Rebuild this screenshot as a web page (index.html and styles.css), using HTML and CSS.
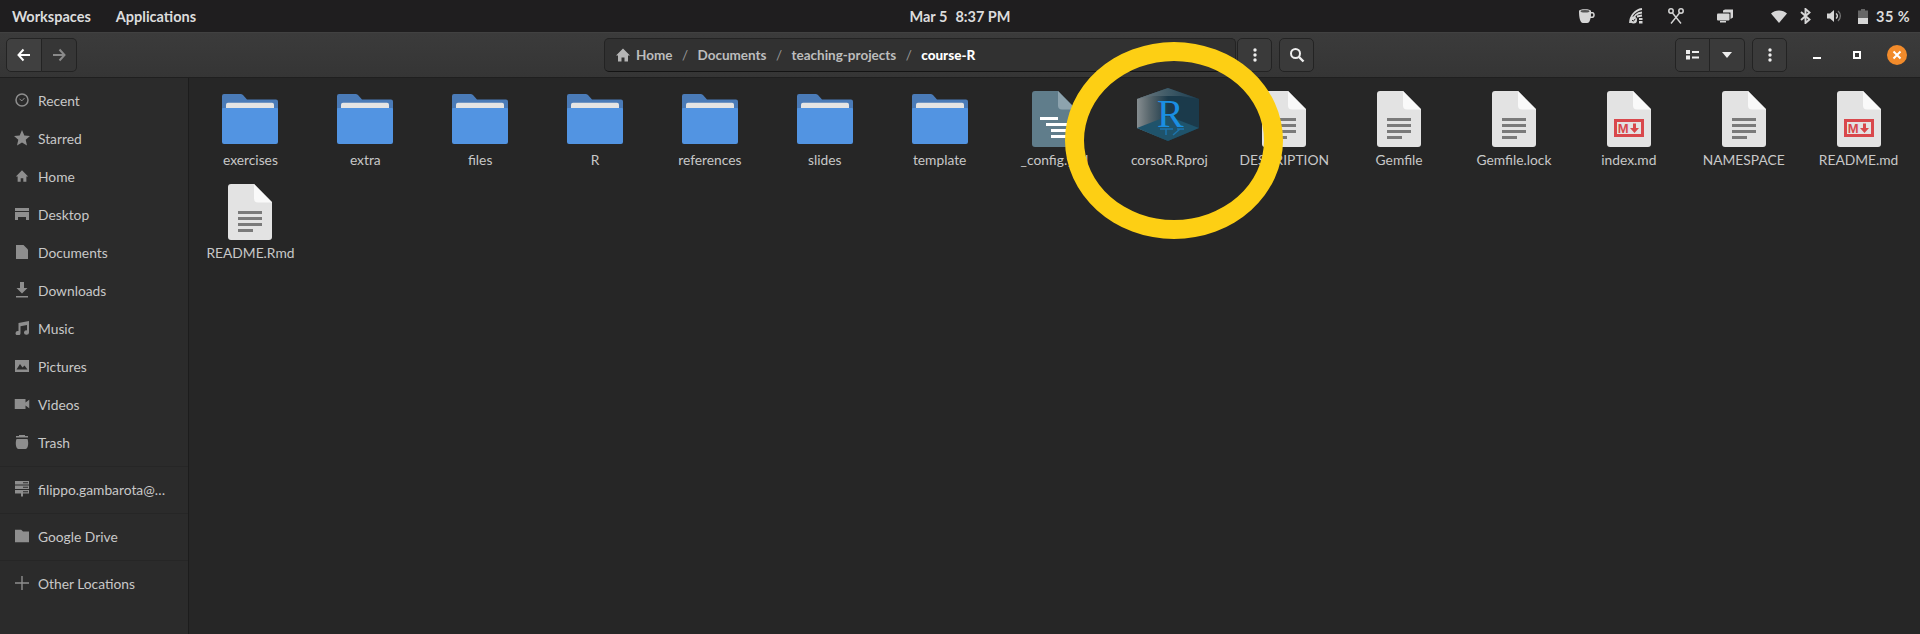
FILE: index.html
```html
<!DOCTYPE html>
<html lang="en">
<head>
  <meta charset="UTF-8">
  <title>course-R - Files</title>
  <link rel="stylesheet" href="styles.css">
</head>
<body>
  <svg class="defs" width="0" height="0">
    <symbol id="folder" viewBox="0 0 56 50">
      <path d="M2 0H18.500Q20 0 21 1L25 5.500H54Q56 5.500 56 7.500V20H0V2Q0 0 2 0Z" fill="#4a7bb8"/>
      <path d="M6 8.800H50Q52 8.800 52 10.800V20H4V10.800Q4 8.800 6 8.800Z" fill="#e4e4e4"/>
      <path d="M0 15Q0 14 1 14H55Q56 14 56 15V48Q56 50 54 50H2Q0 50 0 48Z" fill="#5294e2"/>
    </symbol>
    <symbol id="doc" viewBox="0 0 44 56">
      <path d="M3 0H26L44 18V53Q44 56 41 56H3Q0 56 0 53V3Q0 0 3 0Z" fill="#e3e3e3"/>
      <path d="M26 0L44 18.500H30Q26 18.500 26 14.500Z" fill="#f9f9f9"/>
    </symbol>
    <symbol id="lines" viewBox="0 0 44 56">
      <path d="M10 27H34V30H10ZM10 33H34V36H10ZM10 39H34V42H10ZM10 45H25V48H10Z" fill="#7a7a7a"/>
    </symbol>
    <symbol id="arrow-left" viewBox="0 0 16 16">
      <path d="M7.500 2.500L2.500 8L7.500 13.500M3 8H14" fill="none" stroke="currentColor" stroke-width="2"/>
    </symbol>
    <symbol id="arrow-right" viewBox="0 0 16 16">
      <path d="M8.500 2.500L13.500 8L8.500 13.500M13 8H2" fill="none" stroke="currentColor" stroke-width="2"/>
    </symbol>
    <symbol id="home" viewBox="0 0 16 16">
      <path d="M8 1.500L15 8.500H13V14.500H9.500V10.500H6.500V14.500H3V8.500H1Z" fill="currentColor"/>
    </symbol>
    <symbol id="dots" viewBox="0 0 16 16">
      <circle cx="8" cy="3" r="1.700" fill="currentColor"/><circle cx="8" cy="8" r="1.700" fill="currentColor"/><circle cx="8" cy="13" r="1.700" fill="currentColor"/>
    </symbol>
  </svg>

  <div class="topbar">
    <div class="topbar-left"><span>Workspaces</span><span>Applications</span></div>
    <div class="clock"><span>Mar 5</span><span>8:37 PM</span></div>
    <div class="tray">
      <svg class="tray-coffee" width="18" height="16" viewBox="0 0 18 16"><path d="M1 3C1 .500 13 .500 13 3V4H14.500C17.500 4 17.500 10 14.500 10H12.600C12 13 11 15 9 15H5C2 15 1 9 1 3Z" fill="#d6d6d6"/><ellipse cx="7" cy="3.200" rx="4.500" ry="1.300" fill="#555"/><path d="M13 5.600H14.300C15.600 5.600 15.600 8.400 14.300 8.400H12.900Z" fill="#1f1e1f"/></svg>
      <svg class="tray-net" width="14" height="16" viewBox="0 0 14 16"><path d="M1 15C1 8 6 2 13 1M4.500 12C4.500 8 8 5 13 4.500M8 8.500L13 7.500" fill="none" stroke="#d6d6d6" stroke-width="1.800"/><circle cx="4.500" cy="12" r="3.500" fill="#d6d6d6"/><path d="M3 12L4.300 13.300L6.300 10.800" fill="none" stroke="#1f1e1f" stroke-width="1"/><path d="M10 10H13.500V12H10ZM10 13H13.500V15.500H10Z" fill="#d6d6d6"/></svg>
      <svg class="tray-cut" width="16" height="16" viewBox="0 0 16 16"><circle cx="3" cy="3" r="2.200" fill="none" stroke="#d6d6d6" stroke-width="1.500"/><circle cx="13" cy="3" r="2.200" fill="none" stroke="#d6d6d6" stroke-width="1.500"/><path d="M4.500 5L13 15.500M11.500 5L3 15.500" stroke="#d6d6d6" stroke-width="1.400"/></svg>
      <svg class="tray-screens" width="16" height="14" viewBox="0 0 16 14"><path d="M6 1.500L8 .500H16V8.500L13.500 10V3.500H6Z" fill="#d6d6d6"/><rect x="0" y="4.500" width="12.500" height="7" rx="1" fill="#d6d6d6"/><rect x="3" y="12" width="6" height="1.500" fill="#d6d6d6"/></svg>
      <svg class="tray-wifi" width="16" height="14" viewBox="0 0 16 14"><path d="M0 4.500C4 .500 12 .500 16 4.500L8 14Z" fill="#d6d6d6"/></svg>
      <svg class="tray-bt" width="11" height="16" viewBox="0 0 11 16"><path d="M1 4L9.500 11.500L5.500 15V1L9.500 4.500L1 12" fill="none" stroke="#d6d6d6" stroke-width="1.900"/></svg>
      <svg class="tray-vol" width="15" height="14" viewBox="0 0 15 14"><path d="M0 4.500H3L7 1V13L3 9.500H0Z" fill="#d6d6d6"/><path d="M9 4.500A3 3 0 0 1 9 9.500" fill="none" stroke="#d6d6d6" stroke-width="1.400"/><path d="M11 2A6.500 6.500 0 0 1 11 12" fill="none" stroke="#777" stroke-width="1.300"/></svg>
      <svg class="tray-bat" width="10" height="15" viewBox="0 0 10 15"><path d="M3 0H7V1.500H10V15H0V1.500H3Z" fill="#666"/><rect y="9" width="10" height="6" fill="#d6d6d6"/></svg>
      <span class="battery-text">35 %</span>
    </div>
  </div>

  <header class="headerbar">
    <div class="btn-group nav-group">
      <button class="btn nav-back"><svg width="16" height="16"><use href="#arrow-left"/></svg></button>
      <button class="btn nav-forward"><svg width="16" height="16"><use href="#arrow-right"/></svg></button>
    </div>
    <div class="pathbar">
      <svg class="path-home" width="16" height="16"><use href="#home"/></svg>
      <span>Home</span><i>/</i><span>Documents</span><i>/</i><span>teaching-projects</span><i>/</i><b>course-R</b>
    </div>
    <button class="btn btn-solo path-menu"><svg width="16" height="16"><use href="#dots"/></svg></button>
    <button class="btn btn-solo search-btn">
      <svg width="16" height="16" viewBox="0 0 16 16"><circle cx="6.500" cy="6.500" r="4.500" fill="none" stroke="currentColor" stroke-width="2"/><path d="M10 10L14.500 14.500" stroke="currentColor" stroke-width="2.400"/></svg>
    </button>
    <div class="btn-group view-group">
      <button class="btn view-list"><svg width="14" height="10" viewBox="0 0 14 10"><path d="M0 0H4V4H0ZM0 5.500H4V9.500H0ZM6 1H13V3H6ZM6 6.500H13V8.500H6Z" fill="currentColor"/></svg></button>
      <button class="btn view-drop"><svg width="10" height="6" viewBox="0 0 10 6"><path d="M0 0H10L5 6Z" fill="currentColor"/></svg></button>
    </div>
    <button class="btn btn-solo main-menu"><svg width="16" height="16"><use href="#dots"/></svg></button>
    <div class="wm">
      <span class="wm-min"></span>
      <span class="wm-max"></span>
      <span class="wm-close"><svg width="10" height="10" viewBox="0 0 10 10"><path d="M1.500 1.500L8.500 8.500M8.500 1.500L1.500 8.500" stroke="#fff" stroke-width="2"/></svg></span>
    </div>
  </header>

  <div class="content">
    <nav class="sidebar">
      <div class="section">
        <a class="row"><svg width="14" height="14" viewBox="0 0 14 14"><circle cx="7" cy="7" r="6" fill="none" stroke="currentColor" stroke-width="1.500"/><path d="M4.500 6L7 7.800L9.500 5" fill="none" stroke="currentColor"/></svg>Recent</a>
        <a class="row"><svg width="16" height="16" viewBox="0 0 16 16"><path d="M8 0L10.300 5.400L16 5.900L11.700 9.700L13 15.500L8 12.400L3 15.500L4.300 9.700L0 5.900L5.700 5.400Z" fill="currentColor"/></svg>Starred</a>
        <a class="row"><svg width="14" height="14"><use href="#home"/></svg>Home</a>
        <a class="row"><svg width="14" height="14" viewBox="0 0 14 14"><path d="M0 1H14V4H0ZM0 5H14V13H11V10H3V13H0Z" fill="currentColor"/></svg>Desktop</a>
        <a class="row"><svg width="14" height="14" viewBox="0 0 14 14"><path d="M1 0H8.500L13 4.500V14H1Z" fill="currentColor"/></svg>Documents</a>
        <a class="row"><svg width="14" height="16" viewBox="0 0 14 16"><path d="M5 0H9V6H12.500L7 11.500L1.500 6H5ZM1 14H13V15.500H1Z" fill="currentColor"/></svg>Downloads</a>
        <a class="row"><svg width="14" height="14" viewBox="0 0 14 14"><path d="M3.500 2L14 0V11.500A2.500 2.200 0 1 1 12 9.400V4L5.500 5.200V12A2.500 2.200 0 1 1 3.500 10Z" fill="currentColor"/></svg>Music</a>
        <a class="row"><svg width="14" height="12" viewBox="0 0 14 12"><path d="M0 0H14V12H0ZM1.500 9.500H12.500L9.500 5.500L7.500 7.500L5 4Z" fill="currentColor" fill-rule="evenodd"/></svg>Pictures</a>
        <a class="row"><svg width="15" height="10" viewBox="0 0 15 10"><path d="M0 0H11V3.500L15 .500V9.500L11 6.500V10H0Z" fill="currentColor"/></svg>Videos</a>
        <a class="row"><svg width="14" height="14" viewBox="0 0 14 14"><path d="M4 0H10V1H13V2.500H1V1H4ZM1.500 4H12.500C14 8 13 14 10.500 14H3.500C1 14 0 8 1.500 4Z" fill="currentColor"/></svg>Trash</a>
      </div>
      <div class="section">
        <a class="row"><svg width="14" height="16" viewBox="0 0 14 16"><path d="M0 0H14V3.500H0ZM0 4.500H14V8H0ZM0 9H14V12.500H8V15.500H6V12.500H0Z" fill="currentColor"/><path d="M8 1.200H13V2.200H8ZM8 5.700H13V6.700H8ZM8 10.200H13V11.200H8Z" fill="#2b2b2b"/></svg><span class="ellipsis">filippo.gambarota@…</span></a>
      </div>
      <div class="section">
        <a class="row"><svg width="14" height="13" viewBox="0 0 14 13"><path d="M0 0H6L8 2H14V13H0Z" fill="currentColor"/></svg>Google Drive</a>
      </div>
      <div class="section">
        <a class="row"><svg width="14" height="14" viewBox="0 0 14 14"><path d="M6.300 0H7.700V6.300H14V7.700H7.700V14H6.300V7.700H0V6.300H6.300Z" fill="currentColor"/></svg>Other Locations</a>
      </div>
    </nav>

    <main class="files">
      <div class="item"><div class="thumb"><svg width="56" height="50"><use href="#folder"/></svg></div><span>exercises</span></div>
      <div class="item"><div class="thumb"><svg width="56" height="50"><use href="#folder"/></svg></div><span>extra</span></div>
      <div class="item"><div class="thumb"><svg width="56" height="50"><use href="#folder"/></svg></div><span>files</span></div>
      <div class="item"><div class="thumb"><svg width="56" height="50"><use href="#folder"/></svg></div><span>R</span></div>
      <div class="item"><div class="thumb"><svg width="56" height="50"><use href="#folder"/></svg></div><span>references</span></div>
      <div class="item"><div class="thumb"><svg width="56" height="50"><use href="#folder"/></svg></div><span>slides</span></div>
      <div class="item"><div class="thumb"><svg width="56" height="50"><use href="#folder"/></svg></div><span>template</span></div>
      <div class="item"><div class="thumb">
        <svg width="44" height="56" viewBox="0 0 44 56">
          <path d="M3 0H26L44 18V53Q44 56 41 56H3Q0 56 0 53V3Q0 0 3 0Z" fill="#607d8b"/>
          <path d="M26 0L44 18.500H30Q26 18.500 26 14.500Z" fill="#8da3ae"/>
          <path d="M8 26H26V29H8ZM14 32H36V35H14ZM19 38H36V41H19ZM19 44H36V47H19Z" fill="#fff"/>
        </svg>
      </div><span>_config.yml</span></div>
      <div class="item"><div class="thumb">
        <svg width="64" height="62" viewBox="0 0 64 62">
          <defs>
            <linearGradient id="cube-left" x1="0" x2="1" y1="0" y2="0"><stop offset="0" stop-color="#868d90"/><stop offset=".4" stop-color="#59676d"/><stop offset="1" stop-color="#1b3a4b"/></linearGradient>
            <linearGradient id="cube-top" x1="0" x2="1" y1="0" y2="0"><stop offset="0" stop-color="#6f7a7f"/><stop offset=".5" stop-color="#3f5a67"/><stop offset="1" stop-color="#1d3d50"/></linearGradient>
          </defs>
          <path d="M31 0L62 11V40L31 53L0 40V11Z" fill="#1b3a4b"/>
          <path d="M0 11L31 0V53L0 40Z" fill="url(#cube-left)"/>
          <path d="M0 11L31 0L62 11L44 8L16 8Z" fill="url(#cube-top)"/>
          <path d="M0 40L31 28L62 40L31 53Z" fill="#1f536b"/>
          <text class="cube-r" x="20" y="39">R</text>
          <path d="M23 41H36M40 41H47M29 41V47M43 41L36 47" fill="none" stroke="#1a8fe3" stroke-width="1.500" opacity=".55"/>
        </svg>
      </div><span>corsoR.Rproj</span></div>
      <div class="item"><div class="thumb"><svg width="44" height="56"><use href="#doc"/><use href="#lines"/></svg></div><span>DESCRIPTION</span></div>
      <div class="item"><div class="thumb"><svg width="44" height="56"><use href="#doc"/><use href="#lines"/></svg></div><span>Gemfile</span></div>
      <div class="item"><div class="thumb"><svg width="44" height="56"><use href="#doc"/><use href="#lines"/></svg></div><span>Gemfile.lock</span></div>
      <div class="item"><div class="thumb">
        <svg width="44" height="56" viewBox="0 0 44 56"><use href="#doc"/><rect x="8.500" y="29.500" width="27" height="15" fill="none" stroke="#d9484c" stroke-width="3"/><text class="md-m" x="10.800" y="41.500">M</text><path d="M26 32.500H29V37H32L27.500 42L23 37H26Z" fill="#d9484c"/></svg>
      </div><span>index.md</span></div>
      <div class="item"><div class="thumb"><svg width="44" height="56"><use href="#doc"/><use href="#lines"/></svg></div><span>NAMESPACE</span></div>
      <div class="item"><div class="thumb">
        <svg width="44" height="56" viewBox="0 0 44 56"><use href="#doc"/><rect x="8.500" y="29.500" width="27" height="15" fill="none" stroke="#d9484c" stroke-width="3"/><text class="md-m" x="10.800" y="41.500">M</text><path d="M26 32.500H29V37H32L27.500 42L23 37H26Z" fill="#d9484c"/></svg>
      </div><span>README.md</span></div>
      <div class="item"><div class="thumb"><svg width="44" height="56"><use href="#doc"/><use href="#lines"/></svg></div><span>README.Rmd</span></div>
    </main>
  </div>

  <div class="highlight-ring"></div>
</body>
</html>
```

FILE: styles.css
```css
html, body { margin: 0; height: 100%; }
body {
  position: relative;
  height: 634px;
  overflow: hidden;
  background-color: #262626;
  color: #c8c8c8;
  font-family: Lato, Roboto, sans-serif;
  font-size: 13.8px;
}
.defs { position: absolute; }
svg { display: block; flex: none; }

/* gnome top bar */
.topbar {
  display: grid;
  grid-template-columns: 1fr auto 1fr;
  align-items: center;
  height: 32px;
  background-color: #1f1e1f;
  color: #dcdcdc;
  font-size: 14.5px;
  font-weight: 700;
}
.topbar-left { display: flex; gap: 25px; padding-left: 12px; }
.clock { display: flex; gap: 8px; }
.tray { display: flex; align-items: center; justify-content: flex-end; padding-right: 13px; }
.tray-coffee { margin-right: 33px; }
.tray-net { margin-right: 25px; }
.tray-cut { margin-right: 33px; }
.tray-screens { margin-right: 38px; }
.tray-wifi { margin-right: 13px; }
.tray-bt { margin-right: 16px; }
.tray-vol { margin-right: 16px; }
.tray-bat { margin-right: 8px; }
.battery-text { width: 31px; white-space: nowrap; letter-spacing: .5px; }

/* header bar */
.headerbar {
  display: flex;
  align-items: center;
  box-sizing: border-box;
  height: 46px;
  padding: 0 6px;
  background: linear-gradient(#3b3b3b, #353535);
  border-top: 1px solid #414141;
  border-bottom: 1px solid #1f1f1f;
}
.btn {
  display: flex;
  align-items: center;
  justify-content: center;
  height: 34px;
  padding: 0;
  border: 1px solid #232323;
  background-color: #3a3a3a;
  color: #eee;
}
.btn-group { display: flex; }
.btn-group .btn:first-child { border-radius: 5px 0 0 5px; }
.btn-group .btn:last-child { border-radius: 0 5px 5px 0; border-left: none; }
.btn-solo { width: 35px; border-radius: 5px; }
.nav-back { width: 36px; color: #fff; background-color: #404040; }
.nav-forward { width: 35px; color: #8a8a8a; background-color: #363636; }
.pathbar {
  display: flex;
  align-items: center;
  box-sizing: border-box;
  width: 632px;
  height: 34px;
  margin-left: 527px;
  padding-left: 10px;
  border: 1px solid #232323;
  border-bottom-color: #141414;
  border-radius: 5px;
  background-color: #313131;
  color: #bdbdbd;
  font-size: 13.5px;
  font-weight: 700;
}
.pathbar i { width: 25px; font-style: normal; font-weight: 400; text-align: center; color: #999; }
.pathbar b { color: #fff; }
.path-home { margin-right: 5px; color: #b5b5b5; }
.path-menu { margin-left: 1px; }
.search-btn { margin-left: 7px; }
.view-group { margin-left: 361px; }
.view-list { width: 35px; }
.view-drop { width: 35px; }
.main-menu { margin-left: 7px; }
.wm { display: flex; align-items: center; }
.wm-min { width: 8px; height: 2px; margin: 6px 0 0 26px; background-color: #fff; }
.wm-max { box-sizing: border-box; width: 8px; height: 8px; margin-left: 32px; border: 2px solid #fff; }
.wm-close {
  display: flex;
  align-items: center;
  justify-content: center;
  width: 20px;
  height: 20px;
  margin-left: 26px;
  border-radius: 50%;
  background-color: #f28b2b;
}

/* sidebar and file grid */
.content { display: flex; height: 556px; }
.sidebar {
  box-sizing: border-box;
  flex: none;
  width: 189px;
  padding-top: 3px;
  background-color: #2b2b2b;
  border-right: 1px solid #1c1c1c;
}
.section { padding-bottom: 5px; margin-bottom: 3px; border-bottom: 1px solid #262626; }
.section:last-child { border-bottom: none; }
.row { position: relative; display: flex; align-items: center; height: 38px; padding-left: 38px; }
.row svg { position: absolute; left: 22px; top: 50%; transform: translate(-50%, -50%); color: #8e8e8e; }

.files {
  flex: 1;
  display: grid;
  grid-template-columns: repeat(15, 1fr);
  grid-auto-rows: 93px;
  align-content: start;
  padding: 0 4px;
}
.item { display: flex; flex-direction: column; align-items: center; padding-top: 9px; line-height: 18px; }
.thumb { display: flex; align-items: center; justify-content: center; height: 64px; }
.cube-r { font-family: "Liberation Serif", serif; font-size: 40px; fill: #1a8fe3; }
.md-m { font-family: "Liberation Sans", sans-serif; font-size: 13px; font-weight: 700; fill: #d9484c; }

.highlight-ring {
  position: absolute;
  left: 1065px;
  top: 42px;
  box-sizing: border-box;
  width: 218px;
  height: 197px;
  border: 19px solid #fdcf14;
  border-radius: 50%;
}
```
